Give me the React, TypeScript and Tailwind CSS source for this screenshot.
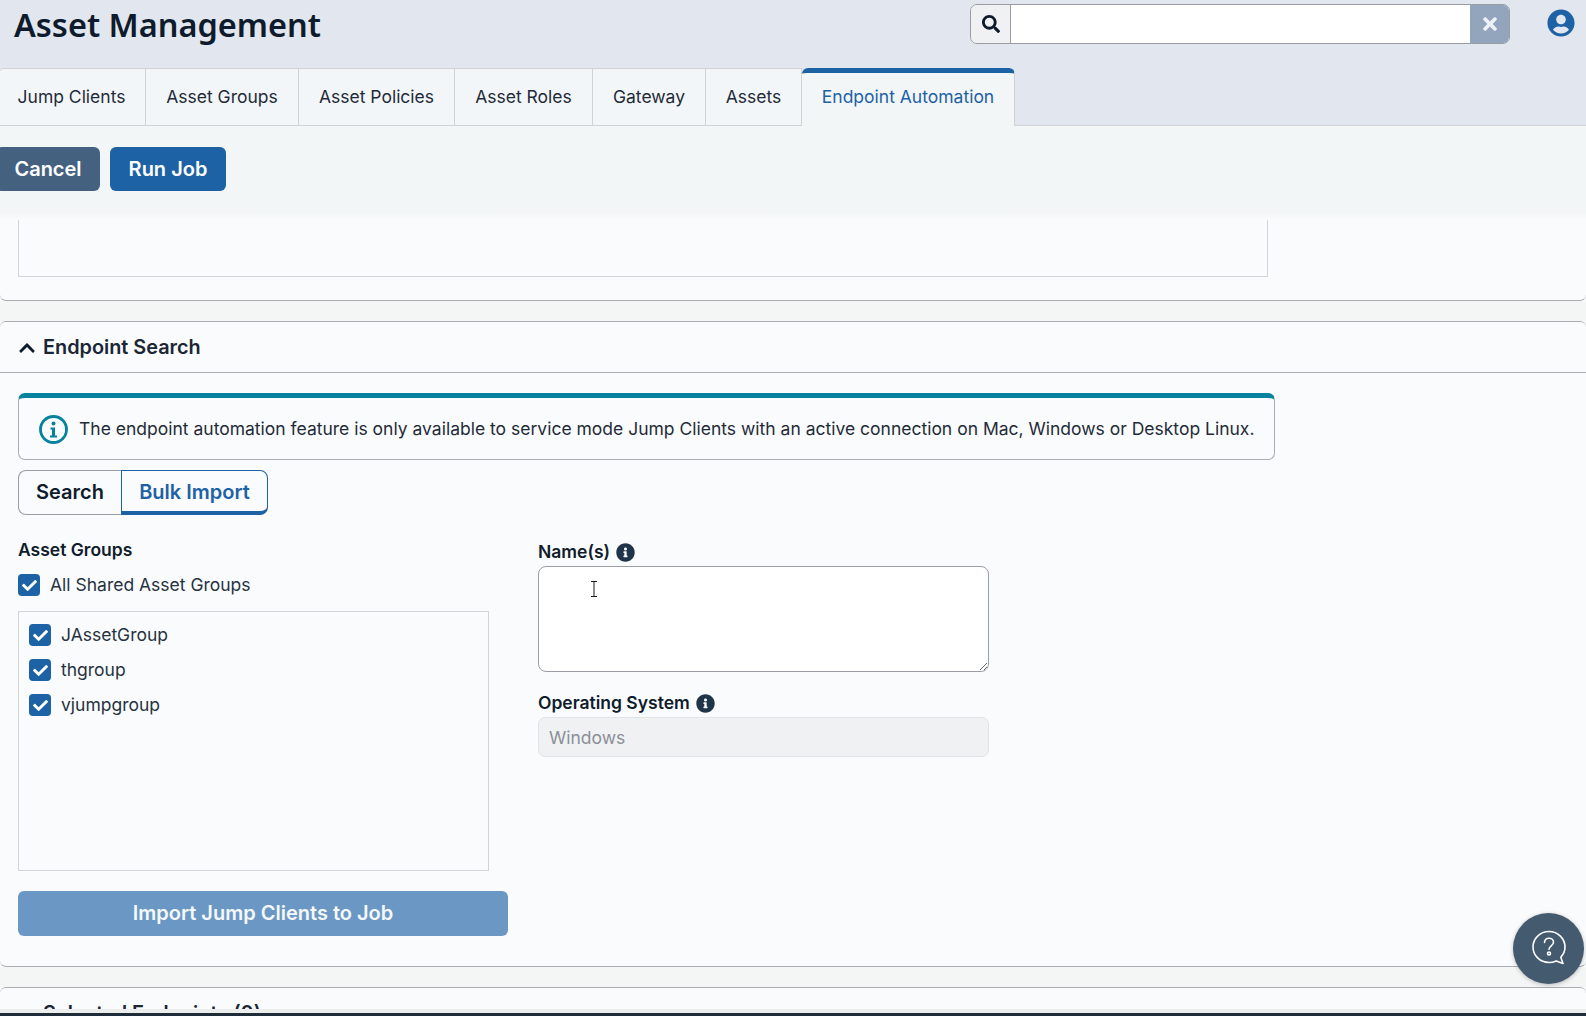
import { FaCheck, FaChevronUp, FaInfoCircle, FaSearch, FaTimes, FaUserCircle } from 'react-icons/fa';

const tabs = [
  { label: 'Jump Clients', width: 'w-[146px] pr-[2px]' },
  { label: 'Asset Groups', width: 'w-[153px]' },
  { label: 'Asset Policies', width: 'w-[156px]' },
  { label: 'Asset Roles', width: 'w-[138px]' },
  { label: 'Gateway', width: 'w-[113px]' },
  { label: 'Assets', width: 'w-[96px]' },
];

function Checkbox({ label }: { label: string }) {
  return (
    <label className="flex items-center gap-[10px] text-[17.5px] leading-[22px] text-[#26323f]">
      <span className="flex h-[22px] w-[22px] items-center justify-center rounded-[4px] bg-[#1d62a4] text-white">
        <FaCheck className="h-[15px] w-[15px]" />
      </span>
      {label}
    </label>
  );
}

function HelpIcon() {
  return (
    <svg width="40" height="40" viewBox="0 0 40 40" fill="none" stroke="white" strokeWidth="1.6">
      <path d="M20 3.5c-9 0-16 7-16 15.5s7 15.5 16 15.5c2.6 0 5-.6 7.200-1.600l6.800 2.600-2.200-6.300c2.600-2.800 4.200-6.400 4.200-10.200 0-8.500-7-15.500-16-15.500z" strokeLinejoin="round" />
      <path d="M15.500 14.500c0-2.600 2-4.300 4.500-4.300s4.500 1.600 4.500 4c0 3.500-4.500 3.600-4.500 7" strokeLinecap="round" />
      <circle cx="20" cy="25.500" r="1.500" />
    </svg>
  );
}

export default function App() {
  return (
    <div className="relative flex h-[1016px] w-[1586px] flex-col overflow-hidden bg-[#fafbfd] font-['Inter',sans-serif] text-[#0f1c2c]">
      {/* Header */}
      <header className="h-[126px] shrink-0 border-b border-[#cfd3d8] bg-[#e2e6ee]">
        <div className="flex h-[68px] items-start">
          <h1 className="ml-[14px] mt-[2px] font-['Noto_Sans',sans-serif] text-[32.5px] font-semibold leading-[46px] text-[#0d1b2c]">
            Asset Management
          </h1>
          <div className="ml-auto mt-[4px] flex h-[40px] w-[540px] overflow-hidden rounded-[7px] border border-[#9a9da3]">
            <span className="flex w-[40px] items-center justify-center border-r border-[#9a9da3] bg-[#f0f1f3] text-[#0d1b2c]">
              <FaSearch className="h-[18px] w-[18px]" />
            </span>
            <input readOnly className="w-[459px] bg-white outline-none" />
            <span className="flex flex-1 items-center justify-center bg-[#93a5bd] text-[#eef1f5]">
              <FaTimes className="h-[20px] w-[20px]" />
            </span>
          </div>
          <FaUserCircle className="ml-[37px] mr-[11px] mt-[9px] h-[28px] w-[28px] text-[#1d62a4]" />
        </div>
        <nav className="flex h-[57px]">
          {tabs.map((tab) => (
            <div
              key={tab.label}
              className={`${tab.width} flex items-center justify-center border-r border-t border-[#cfd3d8] bg-[#f3f6f9] text-[17.5px] text-[#1f2b38] first:rounded-tl-[4px]`}
            >
              {tab.label}
            </div>
          ))}
          <div className="flex h-[58px] w-[213px] items-center justify-center rounded-t-[6px] border-r border-t-[5px] border-r-[#cfd3d8] border-t-[#1d62a4] bg-[#f3f6f7] pb-[4px] text-[17.5px] text-[#1d62a4]">
            Endpoint Automation
          </div>
        </nav>
      </header>

      {/* Toolbar */}
      <div className="flex h-[94px] shrink-0 items-start gap-[10px] bg-linear-to-b from-[#f3f6f7] from-93% to-[#fafbfd] pt-[21px]">
        <button className="-ml-[4px] h-[44px] w-[104px] rounded-[6px] bg-[#44617f] text-[20px] font-semibold text-white">
          Cancel
        </button>
        <button className="h-[44px] w-[116px] rounded-[6px] bg-[#1d62a4] text-[20px] font-semibold text-white">
          Run Job
        </button>
      </div>

      {/* Scrolled content */}
      <main className="flex min-h-0 flex-1 flex-col overflow-hidden">
        <section className="h-[81px] shrink-0 rounded-b-[6px] border-b border-[#a9acb0] pl-[18px]">
          <div className="h-[57px] w-[1250px] border-x border-b border-[#d2d4d8]" />
        </section>

        <div className="h-[20px] shrink-0 bg-[#f4f6f6]" />

        <section className="h-[646px] shrink-0 rounded-[6px] border-y border-[#a9acb0]">
          <div className="flex h-[51px] items-center gap-[7px] border-b border-[#a9acb0] pl-[18px] pt-[1px]">
            <FaChevronUp className="h-[18px] w-[18px] text-[#0f1c2c]" />
            <h2 className="text-[19.85px] font-semibold text-[#1a2634]">Endpoint Search</h2>
          </div>

          <div className="pl-[18px] pt-[20px]">
            <div className="flex h-[67px] w-[1257px] items-center gap-[11px] rounded-[7px] border border-t-[5px] border-[#a9acb0] border-t-[#06819e] pl-[20px] pt-[1px] text-[17.5px] text-[#1f2b38]">
              <svg width="29" height="29" viewBox="0 0 29 29" fill="none" className="shrink-0">
                <circle cx="14.500" cy="14.500" r="13" stroke="#06819e" strokeWidth="2.800" />
                <circle cx="14.500" cy="8.500" r="2" fill="#06819e" />
                <path d="M11.500 12.500h4.500v8h2v2h-7v-2h2v-6h-1.500z" fill="#06819e" />
              </svg>
              The endpoint automation feature is only available to service mode Jump Clients with an active connection on Mac, Windows or Desktop Linux.
            </div>

            <div className="mt-[10px] flex h-[45px] w-[250px] text-[20px] font-semibold">
              <div className="flex w-[103px] items-center justify-center rounded-l-[8px] border border-r-0 border-[#9a9da3] pb-[2px] text-[#0f1c2c]">
                Search
              </div>
              <div className="flex flex-1 items-center justify-center rounded-r-[8px] border border-b-[4px] border-[#1d62a4] pt-[2px] text-[#1d62a4]">
                Bulk Import
              </div>
            </div>

            <div className="flex">
              <div className="w-[490px]">
                <p className="mt-[23px] text-[17.5px] font-semibold leading-[24px] text-[#0f1c2c]">Asset Groups</p>
                <div className="mt-[12px]">
                  <Checkbox label="All Shared Asset Groups" />
                </div>
                <div className="mt-[15px] flex h-[260px] w-[471px] flex-col gap-[13px] border border-[#d2d4d8] pl-[10px] pt-[12px]">
                  <Checkbox label="JAssetGroup" />
                  <Checkbox label="thgroup" />
                  <Checkbox label="vjumpgroup" />
                </div>
                <button className="mt-[20px] h-[45px] w-[490px] rounded-[6px] bg-[#6a97c3] pb-[2px] text-[20px] font-semibold text-[#f5f8fb]">
                  Import Jump Clients to Job
                </button>
              </div>

              <div className="ml-[30px] w-[451px]">
                <div className="mt-[25px] flex items-center gap-[6px] text-[17.5px] font-semibold leading-[24px] text-[#0f1c2c]">
                  Name(s)
                  <FaInfoCircle className="h-[19px] w-[19px] text-[#1f3349]" />
                </div>
                <textarea
                  readOnly
                  className="mt-[2px] block h-[106px] w-[451px] rounded-[8px] border border-[#9a9da3] bg-white outline-none"
                />
                <div className="mt-[19px] flex items-center gap-[6px] text-[17.5px] font-semibold leading-[24px] text-[#0f1c2c]">
                  Operating System
                  <FaInfoCircle className="h-[19px] w-[19px] text-[#1f3349]" />
                </div>
                <input
                  disabled
                  value="Windows"
                  className="mt-[2px] block h-[40px] w-[451px] rounded-[7px] border border-[#e2e3e6] bg-[#f0f1f3] pl-[10px] text-[17.5px] text-[#8b8f97]"
                />
              </div>
            </div>
          </div>
        </section>

        <div className="h-[20px] shrink-0 bg-[#f4f6f6]" />

        <section className="h-[30px] shrink-0 rounded-t-[6px] border-t border-[#a9acb0]">
          <div className="flex items-center gap-[7px] pl-[18px] pt-[11px]">
            <FaChevronUp className="h-[18px] w-[18px] rotate-180 text-[#0f1c2c]" />
            <h2 className="text-[19.85px] font-semibold text-[#1a2634]">Selected Endpoints (0)</h2>
          </div>
        </section>
      </main>

      <div className="h-[4px] shrink-0 bg-[#eceded]" />
      <div className="h-[3px] shrink-0 bg-[#1f2d3a]" />

      {/* Text cursor caught in the capture */}
      <svg width="8" height="16" viewBox="0 0 8 16" fill="none" stroke="#1a1a1a" className="absolute left-[589.5px] top-[581px]">
        <path d="M1 .5h6M4 .5v15M1 15.500h6" />
      </svg>

      {/* Help bubble */}
      <button className="absolute left-[1513px] top-[912.500px] flex h-[71px] w-[71px] items-center justify-center rounded-full bg-[#435a6f] shadow-[0_1px_4px_rgba(0,0,0,0.25)]">
        <HelpIcon />
      </button>
    </div>
  );
}
